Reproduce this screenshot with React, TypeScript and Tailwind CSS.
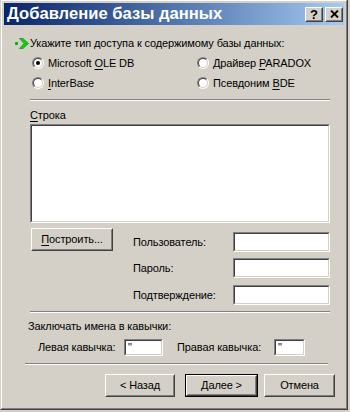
import type { ReactNode } from 'react';

const F = "font-['Liberation_Sans',Arial,sans-serif]";

function Raised({ children, className = '' }: { children?: ReactNode; className?: string }) {
  return (
    <div className={`border border-t-white border-l-white border-r-[#404040] border-b-[#404040] bg-[#d4d0c8] ${className}`}>
      <div className="h-full w-full border border-t-[#d4d0c8] border-l-[#d4d0c8] border-r-[#808080] border-b-[#808080] flex items-center justify-center">
        {children}
      </div>
    </div>
  );
}

function Sunken({ children, className = '' }: { children?: ReactNode; className?: string }) {
  return (
    <div className={`border border-t-[#808080] border-l-[#808080] border-r-white border-b-white shrink-0 ${className}`}>
      <div className="h-full w-full border border-t-[#404040] border-l-[#404040] border-r-[#d4d0c8] border-b-[#d4d0c8] bg-white">
        {children}
      </div>
    </div>
  );
}

function Separator({ className = '' }: { className?: string }) {
  return <div className={`h-[2px] border-t border-t-[#808080] border-b border-b-white ${className}`} />;
}

function Radio({ checked = false }: { checked?: boolean }) {
  return (
    <div className="w-[12px] h-[12px] rounded-full border border-t-[#808080] border-l-[#808080] border-r-white border-b-white shrink-0">
      <div className="w-full h-full rounded-full border border-t-[#404040] border-l-[#404040] border-r-[#d4d0c8] border-b-[#d4d0c8] bg-white flex items-center justify-center">
        {checked && <div className="w-[4px] h-[4px] rounded-full bg-black" />}
      </div>
    </div>
  );
}

function Option({ checked, children }: { checked?: boolean; children: ReactNode }) {
  return (
    <div className="flex items-center h-[20px] gap-[4px]">
      <Radio checked={checked} />
      <span>{children}</span>
    </div>
  );
}

const U = ({ children }: { children: ReactNode }) => (
  <span className="underline underline-offset-[2px]">{children}</span>
);

function StepArrow() {
  return (
    <svg width="16" height="11" viewBox="0 0 16 11" className="shrink-0">
      <rect x="1" y="4" width="3" height="3" rx="1" fill="#00b000" />
      <path d="M5.5 0.5 L9 0.5 L14.5 5.5 L9 10.5 L5.5 10.5 L10 5.5 Z" fill="#10d010" stroke="#008000" strokeWidth="0.6" />
    </svg>
  );
}

function LoginRow({ label, className = '' }: { label: string; className?: string }) {
  return (
    <div className={`flex items-center h-[20px] ${className}`}>
      <span className="w-[100px]">{label}</span>
      <Sunken className="w-[97px] h-[20px]" />
    </div>
  );
}

export default function App() {
  return (
    <div className={`w-[350px] h-[412px] bg-[#d4d0c8] text-black text-[11px] leading-[13px] tracking-[-0.12px] ${F}`}>
      <div className="w-[348px] h-[410px] border-l border-l-[#d4d0c8] border-r border-r-[#404040] border-b border-b-[#404040]">
        <div className="h-full flex flex-col border-l border-t border-l-white border-t-white border-r border-r-[#808080] border-b border-b-[#808080] pt-[2px] px-[2px]">
          <div className="h-[22px] flex items-center bg-linear-to-r from-[#0a246a] to-[#a6caf0] pl-[3px] pr-[1px]">
            <span className="text-white font-bold text-[16.6px] leading-[20px] tracking-normal flex-1">Добавление базы данных</span>
            <Raised className="w-[18px] h-[15px]">
              <span className="font-bold text-[13px] leading-[13px]">?</span>
            </Raised>
            <Raised className="w-[18px] h-[15px] ml-[2px]">
              <svg width="9" height="8" viewBox="0 0 9 8">
                <path d="M1 0.5 L8 7.5 M8 0.5 L1 7.5" stroke="#000" strokeWidth="1.8" />
              </svg>
            </Raised>
          </div>

          <div className="flex items-center h-[13px] mt-[12px] ml-[10px]">
            <StepArrow />
            <span>Укажите тип доступа к содержимому базы данных:</span>
          </div>

          <div className="grid grid-cols-[165px_1fr] mt-[3px] ml-[28px]">
            <Option checked>
              Microsoft <U>O</U>LE DB
            </Option>
            <Option>
              Драйвер <U>P</U>ARADOX
            </Option>
            <Option>
              <U>I</U>nterBase
            </Option>
            <Option>
              Псевдоним <U>B</U>DE
            </Option>
          </div>

          <Separator className="mt-[6px] ml-[26px] w-[300px]" />

          <div className="mt-[8px] ml-[26px] h-[13px]">
            <U>С</U>трока
          </div>
          <Sunken className="mt-[2px] ml-[26px] w-[300px] h-[99px]" />

          <div className="flex mt-[5px] ml-[27px]">
            <Raised className="w-[82px] h-[23px]">
              <span>
                <U>П</U>остроить...
              </span>
            </Raised>
            <div className="flex flex-col ml-[20px] mt-[4px]">
              <LoginRow label="Пользователь:" />
              <LoginRow label="Пароль:" className="mt-[6px]" />
              <LoginRow label="Подтверждение:" className="mt-[7px]" />
            </div>
          </div>

          <Separator className="mt-[6px] ml-[26px] w-[300px]" />

          <div className="mt-[7px] ml-[24px] h-[13px]">Заключать имена в кавычки:</div>

          <div className="flex items-center mt-[6px] ml-[34px] h-[17px]">
            <span className="w-[86px]">Левая кавычка:</span>
            <Sunken className="w-[39px] h-[17px]">
              <div className="pl-[2px] leading-[12px] text-black">"</div>
            </Sunken>
            <span className="w-[97px] ml-[14px]">Правая кавычка:</span>
            <Sunken className="w-[31px] h-[17px]">
              <div className="pl-[2px] leading-[12px] text-black">"</div>
            </Sunken>
          </div>

          <Separator className="mt-[7px] ml-[21px] w-[303px]" />

          <div className="flex mt-[9px] ml-[101px]">
            <Raised className="w-[70px] h-[23px]">{'< Назад'}</Raised>
            <div className="ml-[10px] w-[73px] h-[23px] border border-black">
              <Raised className="w-full h-full">{'Далее >'}</Raised>
            </div>
            <Raised className="ml-[6px] w-[71px] h-[23px]">Отмена</Raised>
          </div>
        </div>
      </div>
    </div>
  );
}
